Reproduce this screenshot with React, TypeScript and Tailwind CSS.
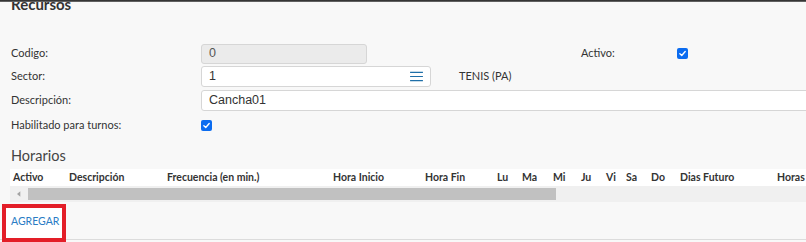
import React from 'react';

const font = { fontFamily: 'Lato, "Open Sans", sans-serif' };
const inputFont = { fontFamily: '"Liberation Sans", Arial, sans-serif' };

function Check() {
  return (
    <div className="w-[11px] h-[11px] rounded-[2px] bg-[#0b6cf0] flex items-center justify-center">
      <svg viewBox="0 0 12 12" className="w-[9px] h-[9px]">
        <path d="M2.5 6.3 L5 8.6 L9.6 3.4" fill="none" stroke="white" strokeWidth="1.8" strokeLinecap="round" strokeLinejoin="round" />
      </svg>
    </div>
  );
}

function Label({ children }: { children: React.ReactNode }) {
  return <div className="w-[201px] shrink-0 pl-[11px] text-[11px] text-[#333]">{children}</div>;
}

const columns: [string, number][] = [
  ['Activo', 56],
  ['Descripción', 98],
  ['Frecuencia (en min.)', 166],
  ['Hora Inicio', 92],
  ['Hora Fin', 72],
  ['Lu', 25],
  ['Ma', 31],
  ['Mi', 28],
  ['Ju', 25],
  ['Vi', 20],
  ['Sa', 25],
  ['Do', 29],
  ['Dias Futuro', 97],
  ['Horas', 60],
];

export default function App() {
  return (
    <div className="w-[806px] h-[242px] overflow-hidden bg-[#f8f8f8] relative text-[#333]" style={font}>
      <div className="relative z-10 h-[2px] bg-gradient-to-b from-[#222] to-[#777]" />
      <h2 className="-mt-[5px] pl-[11px] text-[15px] font-bold leading-[14px] text-[#333]">Recursos</h2>

      <div className="mt-[32px] flex flex-col gap-[2px]">
        <div className="flex items-center h-[21px]">
          <Label>Codigo:</Label>
          <div className="w-[166px] h-[20px] rounded-[3px] border border-[#d6d6d6] bg-[#ebebeb] pl-[7px] flex items-center text-[12.5px] text-[#555]" style={inputFont}>
            0
          </div>
          <div className="ml-[214px] w-[96px] text-[11px]">Activo:</div>
          <Check />
        </div>

        <div className="flex items-center h-[21px]">
          <Label>Sector:</Label>
          <div className="w-[230px] h-[21px] rounded-[3px] border border-[#d6d6d6] bg-white pl-[7px] pr-[6px] flex items-center justify-between text-[12.5px]" style={inputFont}>
            <span>1</span>
            <svg viewBox="0 0 16 12" className="w-[15px] h-[11px]">
              <path d="M1 1.5 H15 M1 6 H15 M1 10.5 H15" stroke="#1f6fa8" strokeWidth="1.3" />
            </svg>
          </div>
          <div className="ml-[28px] text-[11px]">TENIS (PA)</div>
        </div>

        <div className="flex items-center h-[22px]">
          <Label>Descripción:</Label>
          <div className="w-[640px] shrink-0 h-[21px] rounded-[3px] border border-[#d6d6d6] bg-white pl-[7px] flex items-center text-[12.5px]" style={inputFont}>
            Cancha01
          </div>
        </div>

        <div className="flex items-center h-[21px] mt-[2px]">
          <Label>Habilitado para turnos:</Label>
          <Check />
        </div>
      </div>

      <h3 className="mt-[11px] pl-[11px] text-[14.5px] leading-[18px] text-[#444]">Horarios</h3>

      <div className="ml-[10px] mt-[4px]">
        <div className="h-[17px] bg-white flex items-center pl-[3px] text-[10.5px] font-bold text-[#333] whitespace-nowrap">
          {columns.map(([name, w]) => (
            <div key={name} className="shrink-0" style={{ width: w }}>
              {name}
            </div>
          ))}
        </div>
        <div className="h-[16px] bg-[#f0f0f0] flex items-center">
          <div className="w-[18px] flex justify-center">
            <svg viewBox="0 0 6 8" className="w-[4px] h-[6px]">
              <path d="M5 0 L0 4 L5 8 Z" fill="#a3a3a3" />
            </svg>
          </div>
          <div className="w-[528px] h-[12px] bg-[#c1c1c1]" />
        </div>
      </div>

      <div className="mt-[2px] border-b border-[#dcdcdc] h-[36px]">
        <div className="relative ml-[2px] w-[64px] h-[38px] border-[4px] border-[#e31e28] bg-white pl-[5px] pt-[6px]">
          <span className="block text-[10.5px] leading-[14px] text-[#2a7cc4]">AGREGAR</span>
        </div>
      </div>
    </div>
  );
}
